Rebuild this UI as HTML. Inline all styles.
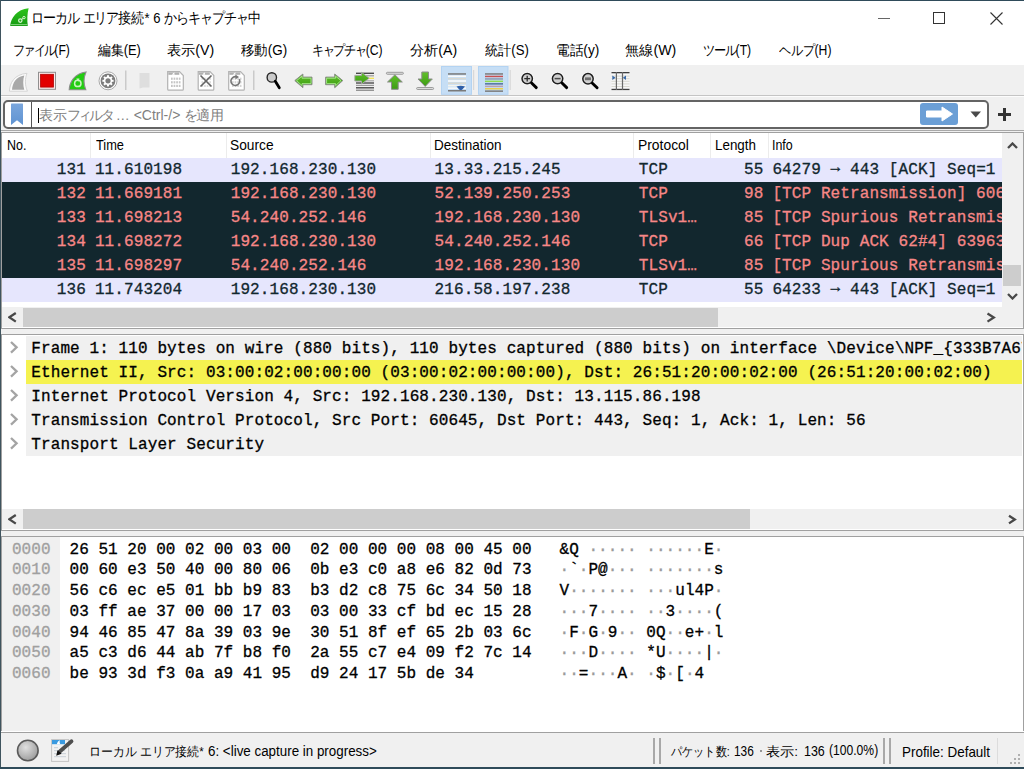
<!DOCTYPE html>
<html lang="ja">
<head>
<meta charset="utf-8">
<style>
*{margin:0;padding:0;box-sizing:border-box;}
html,body{width:1024px;height:769px;overflow:hidden;background:#fff;}
body{position:relative;font-family:"Liberation Sans",sans-serif;}
.a{position:absolute;}
.t{font-family:"Liberation Sans",sans-serif;white-space:pre;line-height:1;transform-origin:0 0;}
.m{font-family:"Liberation Mono",monospace;font-size:16px;white-space:pre;line-height:1;letter-spacing:0.1px;-webkit-text-stroke:0.3px currentColor;}
.d{color:#9a9a9a;}
</style>
</head>
<body>
<div class="a" style="left:0px;top:0px;width:1024px;height:769px;background:#fff;"></div>
<div class="a" style="left:1px;top:65px;width:1023px;height:30px;background:#f0f0f0;"></div>
<div class="a" style="left:1px;top:95px;width:1023px;height:1px;background:#c4c4c4;"></div>
<div class="a" style="left:1px;top:96px;width:1023px;height:1px;background:#fcfcfc;"></div>
<div class="a" style="left:1px;top:97px;width:1023px;height:33px;background:#f0f0f0;"></div>
<div class="a" style="left:1px;top:130px;width:1023px;height:1px;background:#a8a8a8;"></div>
<div class="a" style="left:1px;top:131px;width:1023px;height:1px;background:#f0f0f0;"></div>
<div class="a" style="left:1px;top:132px;width:1023px;height:1px;background:#a0a0a0;"></div>
<svg class="a" style="left:10px;top:8px" width="20" height="20" viewBox="0 0 20 20">
<defs><linearGradient id="gf" x1="0" y1="0" x2="0" y2="1"><stop offset="0" stop-color="#2ec41c"/><stop offset="1" stop-color="#159a12"/></linearGradient></defs>
<path d="M0.2 18 C0.6 10 7 1.2 18.6 0.2 C17.2 5.5 17 12 17.8 18 Z" fill="url(#gf)"/>
<path d="M1 16.6 H17.3" stroke="#8ed98a" stroke-width="0.9"/>
<circle cx="10.3" cy="12.6" r="1.7" fill="none" stroke="#d8f3d0" stroke-width="1.2"/>
<circle cx="14" cy="9.6" r="1.2" fill="none" stroke="#d8f3d0" stroke-width="1"/>
<path d="M11.6 11.4 L13 10.4" stroke="#d8f3d0" stroke-width="1"/>
</svg>
<div class="a t" style="left:30.79px;top:10.0px;font-size:15px;transform:scaleX(0.87);letter-spacing:0px;color:#000;"><span style="letter-spacing:-1.241px">ローカル</span> <span style="letter-spacing:-1.241px">エリア</span>接続* 6 <span style="letter-spacing:-1.241px">からキャプチャ</span>中</div>
<div class="a" style="left:878px;top:17.5px;width:12px;height:1.4px;background:#666;"></div>
<div class="a" style="left:933px;top:12px;width:12px;height:12px;border:1px solid #333"></div>
<svg class="a" style="left:990px;top:12px" width="13" height="13" viewBox="0 0 13 13"><path d="M0.5 0.5L12.5 12.5M12.5 0.5L0.5 12.5" stroke="#333" stroke-width="1.1"/></svg>
<div class="a t" style="left:13.46px;top:43.099999999999994px;font-size:14px;transform:scaleX(0.87);letter-spacing:0px;color:#000;"><span style="letter-spacing:-2.121px">ファイル</span>(F)</div>
<div class="a t" style="left:97.9px;top:42.699999999999996px;font-size:14px;transform:scaleX(0.9196);letter-spacing:0px;color:#000;">編集(E)</div>
<div class="a t" style="left:166.99px;top:42.699999999999996px;font-size:14px;transform:scaleX(1.0133);letter-spacing:0px;color:#000;">表示(V)</div>
<div class="a t" style="left:240.7px;top:42.699999999999996px;font-size:14px;transform:scaleX(0.9596);letter-spacing:0px;color:#000;">移動(G)</div>
<div class="a t" style="left:311.66px;top:43.199999999999996px;font-size:14px;transform:scaleX(0.87);letter-spacing:0px;color:#000;"><span style="letter-spacing:-1.660px">キャプチャ</span>(C)</div>
<div class="a t" style="left:409.69px;top:42.699999999999996px;font-size:14px;transform:scaleX(1.0111);letter-spacing:0px;color:#000;">分析(A)</div>
<div class="a t" style="left:484.6px;top:43.199999999999996px;font-size:14px;transform:scaleX(0.9391);letter-spacing:0px;color:#000;">統計(S)</div>
<div class="a t" style="left:555.62px;top:42.699999999999996px;font-size:14px;transform:scaleX(0.9767);letter-spacing:0px;color:#000;">電話(y)</div>
<div class="a t" style="left:625.29px;top:42.699999999999996px;font-size:14px;transform:scaleX(1.0143);letter-spacing:0px;color:#000;">無線(W)</div>
<div class="a t" style="left:702.83px;top:42.699999999999996px;font-size:14px;transform:scaleX(0.87);letter-spacing:0px;color:#000;"><span style="letter-spacing:-1.521px">ツール</span>(T)</div>
<div class="a t" style="left:778.9px;top:43.199999999999996px;font-size:14px;transform:scaleX(0.87);letter-spacing:0px;color:#000;"><span style="letter-spacing:-0.383px">ヘルプ</span>(H)</div>
<div class="a" style="left:3px;top:100px;width:986px;height:29px;border:2px solid #646464;border-radius:5px;background:#fff"></div>
<svg class="a" style="left:10px;top:103px" width="14" height="23" viewBox="0 0 14 23">
<defs><linearGradient id="bk" x1="0" y1="0" x2="0" y2="1"><stop offset="0" stop-color="#7aa6dc"/><stop offset="1" stop-color="#5f93d2"/></linearGradient></defs>
<path d="M1.5 0.5 H12.5 Q13 0.5 13 1.5 V22 L7 17.2 L1 22 V1.5 Q1 0.5 1.5 0.5Z" fill="url(#bk)"/></svg>
<div class="a" style="left:31px;top:102px;width:1px;height:26px;background:#555;"></div>
<div class="a" style="left:37.8px;top:108px;width:1.6px;height:15px;background:#000;"></div>
<div class="a t" style="left:38.6px;top:108.35px;font-size:14px;transform:scaleX(1.0);letter-spacing:0px;color:#808080;">表示<span style="letter-spacing:-2.680px">フィルタ</span> … &lt;Ctrl-/&gt; <span style="letter-spacing:-2.680px">を</span>適用</div>
<div class="a" style="left:920px;top:103px;width:38px;height:22px;border-radius:3px;background:#6b9fd6"></div>
<svg class="a" style="left:925px;top:106px" width="29" height="16" viewBox="0 0 29 16"><path d="M1.5 5 H17 V1 L27.5 8 L17 15 V11 H1.5 Z" fill="#fff" stroke="#fff" stroke-width="1" stroke-linejoin="round"/></svg>
<svg class="a" style="left:970px;top:111px" width="12" height="7" viewBox="0 0 12 7"><path d="M0.5 0.5 H11 L5.75 6.5Z" fill="#4a4a4a"/></svg>
<div class="a" style="left:998px;top:113px;width:13px;height:3px;background:#333;"></div>
<div class="a" style="left:1003px;top:108px;width:3px;height:13px;background:#333;"></div>
<div class="a" style="left:1px;top:133px;width:1px;height:195px;background:#a0a0a0;"></div>
<div class="a" style="left:1023px;top:133px;width:1px;height:195px;background:#a0a0a0;"></div>
<div class="a" style="left:2px;top:133px;width:1000px;height:174px;background:#fff;"></div>
<div class="a" style="left:90px;top:133px;width:1px;height:25px;background:#ececec;"></div>
<div class="a" style="left:226px;top:133px;width:1px;height:25px;background:#ececec;"></div>
<div class="a" style="left:430px;top:133px;width:1px;height:25px;background:#ececec;"></div>
<div class="a" style="left:633px;top:133px;width:1px;height:25px;background:#ececec;"></div>
<div class="a" style="left:710px;top:133px;width:1px;height:25px;background:#ececec;"></div>
<div class="a" style="left:768px;top:133px;width:1px;height:25px;background:#ececec;"></div>
<div class="a t" style="left:6.87px;top:137.2px;font-size:15px;transform:scaleX(0.8333);letter-spacing:0px;color:#000;">No.</div>
<div class="a t" style="left:95.6px;top:137.2px;font-size:15px;transform:scaleX(0.8531);letter-spacing:0px;color:#000;">Time</div>
<div class="a t" style="left:229.78px;top:137.2px;font-size:15px;transform:scaleX(0.9174);letter-spacing:0px;color:#000;">Source</div>
<div class="a t" style="left:434.3px;top:137.2px;font-size:15px;transform:scaleX(0.9);letter-spacing:0px;color:#000;">Destination</div>
<div class="a t" style="left:638.08px;top:137.2px;font-size:15px;transform:scaleX(0.9245);letter-spacing:0px;color:#000;">Protocol</div>
<div class="a t" style="left:714.61px;top:137.2px;font-size:15px;transform:scaleX(0.8932);letter-spacing:0px;color:#000;">Length</div>
<div class="a t" style="left:772.27px;top:137.2px;font-size:15px;transform:scaleX(0.8292);letter-spacing:0px;color:#000;">Info</div>
<div class="a" style="left:2px;top:158px;width:1000px;height:24px;background:#e6e6fd;"></div>
<div class="a m" style="left:56.8px;top:162.1px;color:#12272e;">131</div>
<div class="a m" style="left:94.9px;top:162.1px;color:#12272e;">11.610198</div>
<div class="a m" style="left:230.7px;top:162.1px;color:#12272e;">192.168.230.130</div>
<div class="a m" style="left:434.6px;top:162.1px;color:#12272e;">13.33.215.245</div>
<div class="a m" style="left:638.8px;top:162.1px;color:#12272e;">TCP</div>
<div class="a m" style="left:744.0px;top:162.1px;color:#12272e;">55</div>
<div class="a m" style="left:772.4px;top:162.1px;color:#12272e;width:229.60000000000002px;overflow:hidden">64279 <span style="position:relative;top:-2.5px">→</span> 443 [ACK] Seq=1 Ack=1 Win=1025 Len=0</div>
<div class="a" style="left:2px;top:182px;width:1000px;height:24px;background:#12272e;"></div>
<div class="a m" style="left:56.8px;top:186.1px;color:#f78787;">132</div>
<div class="a m" style="left:94.9px;top:186.1px;color:#f78787;">11.669181</div>
<div class="a m" style="left:230.7px;top:186.1px;color:#f78787;">192.168.230.130</div>
<div class="a m" style="left:434.6px;top:186.1px;color:#f78787;">52.139.250.253</div>
<div class="a m" style="left:638.8px;top:186.1px;color:#f78787;">TCP</div>
<div class="a m" style="left:744.0px;top:186.1px;color:#f78787;">98</div>
<div class="a m" style="left:772.4px;top:186.1px;color:#f78787;width:229.60000000000002px;overflow:hidden">[TCP Retransmission] 60645 <span style="position:relative;top:-2.5px">→</span> 443 [PSH, ACK]</div>
<div class="a" style="left:2px;top:206px;width:1000px;height:24px;background:#12272e;"></div>
<div class="a m" style="left:56.8px;top:210.1px;color:#f78787;">133</div>
<div class="a m" style="left:94.9px;top:210.1px;color:#f78787;">11.698213</div>
<div class="a m" style="left:230.7px;top:210.1px;color:#f78787;">54.240.252.146</div>
<div class="a m" style="left:434.6px;top:210.1px;color:#f78787;">192.168.230.130</div>
<div class="a m" style="left:638.8px;top:210.1px;color:#f78787;">TLSv1…</div>
<div class="a m" style="left:744.0px;top:210.1px;color:#f78787;">85</div>
<div class="a m" style="left:772.4px;top:210.1px;color:#f78787;width:229.60000000000002px;overflow:hidden">[TCP Spurious Retransmission] , Application Data</div>
<div class="a" style="left:2px;top:230px;width:1000px;height:24px;background:#12272e;"></div>
<div class="a m" style="left:56.8px;top:234.1px;color:#f78787;">134</div>
<div class="a m" style="left:94.9px;top:234.1px;color:#f78787;">11.698272</div>
<div class="a m" style="left:230.7px;top:234.1px;color:#f78787;">192.168.230.130</div>
<div class="a m" style="left:434.6px;top:234.1px;color:#f78787;">54.240.252.146</div>
<div class="a m" style="left:638.8px;top:234.1px;color:#f78787;">TCP</div>
<div class="a m" style="left:744.0px;top:234.1px;color:#f78787;">66</div>
<div class="a m" style="left:772.4px;top:234.1px;color:#f78787;width:229.60000000000002px;overflow:hidden">[TCP Dup ACK 62#4] 63963 <span style="position:relative;top:-2.5px">→</span> 443 [ACK] Seq=1</div>
<div class="a" style="left:2px;top:254px;width:1000px;height:24px;background:#12272e;"></div>
<div class="a m" style="left:56.8px;top:258.1px;color:#f78787;">135</div>
<div class="a m" style="left:94.9px;top:258.1px;color:#f78787;">11.698297</div>
<div class="a m" style="left:230.7px;top:258.1px;color:#f78787;">54.240.252.146</div>
<div class="a m" style="left:434.6px;top:258.1px;color:#f78787;">192.168.230.130</div>
<div class="a m" style="left:638.8px;top:258.1px;color:#f78787;">TLSv1…</div>
<div class="a m" style="left:744.0px;top:258.1px;color:#f78787;">85</div>
<div class="a m" style="left:772.4px;top:258.1px;color:#f78787;width:229.60000000000002px;overflow:hidden">[TCP Spurious Retransmission] , Application Data</div>
<div class="a" style="left:2px;top:278px;width:1000px;height:24px;background:#e6e6fd;"></div>
<div class="a m" style="left:56.8px;top:282.1px;color:#12272e;">136</div>
<div class="a m" style="left:94.9px;top:282.1px;color:#12272e;">11.743204</div>
<div class="a m" style="left:230.7px;top:282.1px;color:#12272e;">192.168.230.130</div>
<div class="a m" style="left:434.6px;top:282.1px;color:#12272e;">216.58.197.238</div>
<div class="a m" style="left:638.8px;top:282.1px;color:#12272e;">TCP</div>
<div class="a m" style="left:744.0px;top:282.1px;color:#12272e;">55</div>
<div class="a m" style="left:772.4px;top:282.1px;color:#12272e;width:229.60000000000002px;overflow:hidden">64233 <span style="position:relative;top:-2.5px">→</span> 443 [ACK] Seq=1 Ack=1 Win=1025 Len=0</div>
<div class="a" style="left:1002px;top:133px;width:21px;height:194px;background:#f0f0f0;"></div>
<div class="a" style="left:1003px;top:265px;width:18px;height:21px;background:#cdcdcd;"></div>
<svg class="a" style="left:1007px;top:142px" width="11" height="7" viewBox="0 0 11 7"><path d="M1 6 L5.5 1.5 L10 6" fill="none" stroke="#484848" stroke-width="2.3"/></svg>
<svg class="a" style="left:1007px;top:293px" width="11" height="7" viewBox="0 0 11 7"><path d="M1 1 L5.5 5.5 L10 1" fill="none" stroke="#484848" stroke-width="2.3"/></svg>
<div class="a" style="left:2px;top:307px;width:1000px;height:20px;background:#f0f0f0;"></div>
<div class="a" style="left:23px;top:308px;width:695px;height:19px;background:#cdcdcd;"></div>
<svg class="a" style="left:8px;top:312px" width="9" height="11" viewBox="0 0 9 11"><path d="M7.8 1 L1.3 5.3 L7.8 9.6" fill="none" stroke="#484848" stroke-width="2.3"/></svg>
<svg class="a" style="left:985px;top:312px" width="11" height="11" viewBox="0 0 11 11"><path d="M2.5 1.5 L8.8 5.5 L2.5 9.6" fill="none" stroke="#484848" stroke-width="2.3"/></svg>
<div class="a" style="left:1px;top:328px;width:1023px;height:1px;background:#a0a0a0;"></div>
<div class="a" style="left:1px;top:329px;width:1023px;height:5px;background:#f0f0f0;"></div>
<div class="a" style="left:1px;top:334px;width:1023px;height:1px;background:#a0a0a0;"></div>
<div class="a" style="left:1px;top:335px;width:1px;height:195px;background:#a0a0a0;"></div>
<div class="a" style="left:1023px;top:335px;width:1px;height:195px;background:#a0a0a0;"></div>
<div class="a" style="left:26px;top:335.5px;width:996px;height:24px;background:#f0f0f0;"></div>
<svg class="a" style="left:9px;top:341px" width="10" height="13" viewBox="0 0 10 13"><path d="M2 1 L7.6 6.3 L2 11.6" fill="none" stroke="#a4a4a4" stroke-width="2.3"/></svg>
<div class="a m" style="left:31.3px;top:341.4px;color:#000;width:990.7px;overflow:hidden">Frame 1: 110 bytes on wire (880 bits), 110 bytes captured (880 bits) on interface \Device\NPF_{333B7A67-1234}</div>
<div class="a" style="left:26px;top:359.5px;width:996px;height:24px;background:#f5f250;"></div>
<svg class="a" style="left:9px;top:365px" width="10" height="13" viewBox="0 0 10 13"><path d="M2 1 L7.6 6.3 L2 11.6" fill="none" stroke="#a4a4a4" stroke-width="2.3"/></svg>
<div class="a m" style="left:31.3px;top:365.4px;color:#000;width:990.7px;overflow:hidden">Ethernet II, Src: 03:00:02:00:00:00 (03:00:02:00:00:00), Dst: 26:51:20:00:02:00 (26:51:20:00:02:00)</div>
<div class="a" style="left:26px;top:383.5px;width:996px;height:24px;background:#f0f0f0;"></div>
<svg class="a" style="left:9px;top:389px" width="10" height="13" viewBox="0 0 10 13"><path d="M2 1 L7.6 6.3 L2 11.6" fill="none" stroke="#a4a4a4" stroke-width="2.3"/></svg>
<div class="a m" style="left:31.3px;top:389.4px;color:#000;width:990.7px;overflow:hidden">Internet Protocol Version 4, Src: 192.168.230.130, Dst: 13.115.86.198</div>
<div class="a" style="left:26px;top:407.5px;width:996px;height:24px;background:#f0f0f0;"></div>
<svg class="a" style="left:9px;top:413px" width="10" height="13" viewBox="0 0 10 13"><path d="M2 1 L7.6 6.3 L2 11.6" fill="none" stroke="#a4a4a4" stroke-width="2.3"/></svg>
<div class="a m" style="left:31.3px;top:413.4px;color:#000;width:990.7px;overflow:hidden">Transmission Control Protocol, Src Port: 60645, Dst Port: 443, Seq: 1, Ack: 1, Len: 56</div>
<div class="a" style="left:26px;top:431.5px;width:996px;height:24px;background:#f0f0f0;"></div>
<svg class="a" style="left:9px;top:437px" width="10" height="13" viewBox="0 0 10 13"><path d="M2 1 L7.6 6.3 L2 11.6" fill="none" stroke="#a4a4a4" stroke-width="2.3"/></svg>
<div class="a m" style="left:31.3px;top:437.4px;color:#000;width:990.7px;overflow:hidden">Transport Layer Security</div>
<div class="a" style="left:2px;top:509px;width:1021px;height:20px;background:#f0f0f0;"></div>
<div class="a" style="left:23px;top:509px;width:727px;height:20px;background:#cdcdcd;"></div>
<svg class="a" style="left:8px;top:514px" width="9" height="11" viewBox="0 0 9 11"><path d="M7.8 1 L1.3 5.3 L7.8 9.6" fill="none" stroke="#484848" stroke-width="2.3"/></svg>
<svg class="a" style="left:1006px;top:514px" width="11" height="11" viewBox="0 0 11 11"><path d="M3 1.8 L8.8 5.5 L3 9.4" fill="none" stroke="#484848" stroke-width="2.3"/></svg>
<div class="a" style="left:1px;top:530px;width:1023px;height:1px;background:#a0a0a0;"></div>
<div class="a" style="left:1px;top:531px;width:1023px;height:5px;background:#f0f0f0;"></div>
<div class="a" style="left:1px;top:536px;width:1023px;height:1px;background:#a0a0a0;"></div>
<div class="a" style="left:1px;top:537px;width:1px;height:195px;background:#a0a0a0;"></div>
<div class="a" style="left:1023px;top:537px;width:1px;height:195px;background:#a0a0a0;"></div>
<div class="a" style="left:2px;top:537px;width:58px;height:194px;background:#f0f0f0;"></div>
<div class="a m" style="left:11.9px;top:541.6px;color:#a0a0a0;">0000</div>
<div class="a m" style="left:69.5px;top:541.6px;color:#000;letter-spacing:0.025000000000000355px">26 51 20 00 02 00 03 00  02 00 00 00 08 00 45 00</div>
<div class="a m" style="left:559.575px;top:541.6px;color:#000;letter-spacing:0.025000000000000355px">&amp;Q <span class="d">·</span><span class="d">·</span><span class="d">·</span><span class="d">·</span><span class="d">·</span> <span class="d">·</span><span class="d">·</span><span class="d">·</span><span class="d">·</span><span class="d">·</span><span class="d">·</span>E<span class="d">·</span></div>
<div class="a m" style="left:11.9px;top:562.33px;color:#a0a0a0;">0010</div>
<div class="a m" style="left:69.5px;top:562.33px;color:#000;letter-spacing:0.025000000000000355px">00 60 e3 50 40 00 80 06  0b e3 c0 a8 e6 82 0d 73</div>
<div class="a m" style="left:559.575px;top:562.33px;color:#000;letter-spacing:0.025000000000000355px"><span class="d">·</span>`<span class="d">·</span>P@<span class="d">·</span><span class="d">·</span><span class="d">·</span> <span class="d">·</span><span class="d">·</span><span class="d">·</span><span class="d">·</span><span class="d">·</span><span class="d">·</span><span class="d">·</span>s</div>
<div class="a m" style="left:11.9px;top:583.0600000000001px;color:#a0a0a0;">0020</div>
<div class="a m" style="left:69.5px;top:583.0600000000001px;color:#000;letter-spacing:0.025000000000000355px">56 c6 ec e5 01 bb b9 83  b3 d2 c8 75 6c 34 50 18</div>
<div class="a m" style="left:559.575px;top:583.0600000000001px;color:#000;letter-spacing:0.025000000000000355px">V<span class="d">·</span><span class="d">·</span><span class="d">·</span><span class="d">·</span><span class="d">·</span><span class="d">·</span><span class="d">·</span> <span class="d">·</span><span class="d">·</span><span class="d">·</span>ul4P<span class="d">·</span></div>
<div class="a m" style="left:11.9px;top:603.79px;color:#a0a0a0;">0030</div>
<div class="a m" style="left:69.5px;top:603.79px;color:#000;letter-spacing:0.025000000000000355px">03 ff ae 37 00 00 17 03  03 00 33 cf bd ec 15 28</div>
<div class="a m" style="left:559.575px;top:603.79px;color:#000;letter-spacing:0.025000000000000355px"><span class="d">·</span><span class="d">·</span><span class="d">·</span>7<span class="d">·</span><span class="d">·</span><span class="d">·</span><span class="d">·</span> <span class="d">·</span><span class="d">·</span>3<span class="d">·</span><span class="d">·</span><span class="d">·</span><span class="d">·</span>(</div>
<div class="a m" style="left:11.9px;top:624.52px;color:#a0a0a0;">0040</div>
<div class="a m" style="left:69.5px;top:624.52px;color:#000;letter-spacing:0.025000000000000355px">94 46 85 47 8a 39 03 9e  30 51 8f ef 65 2b 03 6c</div>
<div class="a m" style="left:559.575px;top:624.52px;color:#000;letter-spacing:0.025000000000000355px"><span class="d">·</span>F<span class="d">·</span>G<span class="d">·</span>9<span class="d">·</span><span class="d">·</span> 0Q<span class="d">·</span><span class="d">·</span>e+<span class="d">·</span>l</div>
<div class="a m" style="left:11.9px;top:645.25px;color:#a0a0a0;">0050</div>
<div class="a m" style="left:69.5px;top:645.25px;color:#000;letter-spacing:0.025000000000000355px">a5 c3 d6 44 ab 7f b8 f0  2a 55 c7 e4 09 f2 7c 14</div>
<div class="a m" style="left:559.575px;top:645.25px;color:#000;letter-spacing:0.025000000000000355px"><span class="d">·</span><span class="d">·</span><span class="d">·</span>D<span class="d">·</span><span class="d">·</span><span class="d">·</span><span class="d">·</span> *U<span class="d">·</span><span class="d">·</span><span class="d">·</span><span class="d">·</span>|<span class="d">·</span></div>
<div class="a m" style="left:11.9px;top:665.98px;color:#a0a0a0;">0060</div>
<div class="a m" style="left:69.5px;top:665.98px;color:#000;letter-spacing:0.025000000000000355px">be 93 3d f3 0a a9 41 95  d9 24 17 5b de 34</div>
<div class="a m" style="left:559.575px;top:665.98px;color:#000;letter-spacing:0.025000000000000355px"><span class="d">·</span><span class="d">·</span>=<span class="d">·</span><span class="d">·</span><span class="d">·</span>A<span class="d">·</span> <span class="d">·</span>$<span class="d">·</span>[<span class="d">·</span>4</div>
<div class="a" style="left:1px;top:731px;width:1023px;height:1px;background:#fff;"></div>
<div class="a" style="left:1px;top:732px;width:1023px;height:1px;background:#a0a0a0;"></div>
<div class="a" style="left:1px;top:733px;width:1023px;height:34px;background:#f0f0f0;"></div>
<svg class="a" style="left:16px;top:738px" width="24" height="25" viewBox="0 0 24 25">
<defs><radialGradient id="cg" cx="0.4" cy="0.35" r="0.7"><stop offset="0" stop-color="#e0e0e0"/><stop offset="1" stop-color="#9a9a9a"/></radialGradient></defs>
<circle cx="11.8" cy="12.5" r="10.3" fill="url(#cg)" stroke="#5a5a5a" stroke-width="1.6"/></svg>
<svg class="a" style="left:50px;top:738px" width="25" height="25" viewBox="50 738 25 25">
<rect x="51.6" y="739.6" width="17" height="21.8" fill="#f2f2f2" stroke="#c4c4c4" stroke-width="1"/>
<rect x="52" y="740" width="13" height="4.2" fill="#3a9ae0"/>
<path d="M56.8 744.2 C57.3 741.8 58.6 740.6 60 740.2 C59.4 741.6 59.5 743 60.4 744.2 Z" fill="#fff"/>
<g fill="#d0d6dc"><rect x="54" y="747" width="4" height="1.2"/><rect x="54" y="750" width="11" height="1.2"/><rect x="54" y="753" width="12" height="1.2"/><rect x="54" y="756" width="12" height="1.2"/></g>
<path d="M59.2 752 L71.5 741.2" stroke="#4e4e4e" stroke-width="3.8" stroke-linecap="round"/>
<path d="M56.2 755.8 L57.6 750.3 L61.6 753.8 Z" fill="#111"/>
</svg>
<div class="a t" style="left:89.17px;top:746.15px;font-size:12.5px;transform:scaleX(0.9154);letter-spacing:0px;color:#000;">ローカル エリア接続*</div>
<div class="a t" style="left:208.14px;top:743.65px;font-size:14px;transform:scaleX(0.9554);letter-spacing:0px;color:#000;">6: &lt;live capture in progress&gt;</div>
<div class="a" style="left:653px;top:738px;width:2px;height:26px;background:#a8a8a8;"></div>
<div class="a" style="left:659px;top:738px;width:2px;height:26px;background:#a8a8a8;"></div>
<div class="a t" style="left:670.8px;top:745.5px;font-size:12.5px;transform:scaleX(0.8559);letter-spacing:0px;color:#000;">パケット数:</div>
<div class="a t" style="left:734.35px;top:743.65px;font-size:14px;transform:scaleX(0.8455);letter-spacing:0px;color:#000;">136</div>
<div class="a t" style="left:766.31px;top:746.0px;font-size:12.5px;transform:scaleX(1.0857);letter-spacing:0px;color:#000;">表示:</div>
<div class="a t" style="left:804.11px;top:743.65px;font-size:14px;transform:scaleX(0.8909);letter-spacing:0px;color:#000;">136</div>
<div class="a t" style="left:828.83px;top:743.25px;font-size:14px;transform:scaleX(0.8655);letter-spacing:0px;color:#000;">(100.0%)</div>
<div class="a" style="left:759.6px;top:750.2px;width:2.2px;height:2.2px;background:#777;border-radius:50%"></div>
<div class="a" style="left:883px;top:738px;width:2px;height:26px;background:#a8a8a8;"></div>
<div class="a" style="left:889px;top:738px;width:2px;height:26px;background:#a8a8a8;"></div>
<div class="a t" style="left:902.27px;top:744.5px;font-size:14.5px;transform:scaleX(0.9255);letter-spacing:0px;color:#000;">Profile: Default</div>
<div class="a" style="left:997px;top:738px;width:1px;height:26px;background:#dcdcdc;"></div>
<div class="a" style="left:1018px;top:754px;width:2px;height:2px;background:#b0b0b0;"></div>
<div class="a" style="left:1014px;top:758px;width:2px;height:2px;background:#b0b0b0;"></div>
<div class="a" style="left:1018px;top:758px;width:2px;height:2px;background:#b0b0b0;"></div>
<div class="a" style="left:1010px;top:762px;width:2px;height:2px;background:#b0b0b0;"></div>
<div class="a" style="left:1014px;top:762px;width:2px;height:2px;background:#b0b0b0;"></div>
<div class="a" style="left:1018px;top:762px;width:2px;height:2px;background:#b0b0b0;"></div>
<div class="a" style="left:0px;top:0px;width:1024px;height:1px;background:#2f4b5a;"></div>
<div class="a" style="left:0px;top:0px;width:1px;height:769px;background:#3f545e;"></div>
<div class="a" style="left:0px;top:767px;width:1024px;height:2px;background:#2f4b5a;"></div>
<svg class="a" style="left:0;top:62px" width="640" height="36" viewBox="0 62 640 36">
<defs>
<linearGradient id="ga" x1="0" y1="0" x2="0" y2="1"><stop offset="0" stop-color="#62c02c"/><stop offset="1" stop-color="#3c9c12"/></linearGradient>
</defs>
<!-- gray fin -->
<path d="M9.4 91.2 C9.8 83 14 74.5 27 73.3 C24.9 78.5 24.7 85 27.4 91.2 Z" fill="#fbfbfb" stroke="#d0d0d0" stroke-width="0.9"/>
<path d="M12 89.7 C12.5 83 16 76.5 24.3 75.4 C22.9 79.5 22.9 85 24.3 89.7 Z" fill="#a9a9a9"/>
<!-- stop -->
<rect x="38.5" y="72.3" width="17" height="17" fill="#fdeaea" stroke="#8f8f8f" stroke-width="1"/>
<rect x="40.6" y="74.3" width="12.8" height="12.8" fill="#e20000" stroke="#b00000" stroke-width="0.8"/>
<!-- green fin -->
<path d="M69.2 89.8 C69.6 82 74.5 73.5 86 72 C83.6 77.5 83.4 84 85.8 89.8 Z" fill="#22cc11" stroke="#8c8c8c" stroke-width="1.1"/>
<circle cx="77.8" cy="83.4" r="3.2" fill="none" stroke="#c9f3bf" stroke-width="1.5"/>
<path d="M76.3 78.5 L79.5 78.5 L78.2 81.8 Z" fill="#c9f3bf"/>
<!-- gear -->
<circle cx="108" cy="80.8" r="9" fill="#fdfdfd" stroke="#a0a0a0" stroke-width="0.9"/>
<circle cx="108" cy="80.8" r="7.4" fill="#7c7c7c"/>
<g fill="#fff">
<circle cx="108" cy="80.8" r="4.2"/>
<rect x="107" y="75.2" width="2" height="11.2"/>
<rect x="102.4" y="79.8" width="11.2" height="2"/>
<rect x="107" y="75.2" width="2" height="11.2" transform="rotate(45 108 80.8)"/>
<rect x="107" y="75.2" width="2" height="11.2" transform="rotate(-45 108 80.8)"/>
</g>
<circle cx="108" cy="80.8" r="2.6" fill="#7c7c7c"/>
<!-- sep -->
<rect x="125" y="70.5" width="1.5" height="19.5" fill="#cacaca"/>
<!-- faded icon -->
<path d="M139.5 73 L149.5 73 L149.5 87.5 L143 87.5 L139.5 88.5 Z" fill="#dedede"/>
<!-- doc -->
<g>
<path d="M167.7 71.7 H179.5 L183.3 75.5 V89.2 Q183.3 90.2 182.3 90.2 H168.7 Q167.7 90.2 167.7 89.2 Z" fill="#fff" stroke="#b2b2b2" stroke-width="1.2"/>
<path d="M168.3 72.3 H179.3 V74.8 H168.3 Z" fill="#b0b0b0"/>
<path d="M172 74.8 C172.5 73.6 173.5 72.8 174.6 72.5 C174.2 73.3 174.3 74 174.8 74.8 Z" fill="#fff"/>
<rect x="171.0" y="77.6" width="1.7" height="2.2" fill="#c4c4c4"/><rect x="173.6" y="77.6" width="1.7" height="2.2" fill="#c4c4c4"/><rect x="176.2" y="77.6" width="1.7" height="2.2" fill="#c4c4c4"/><rect x="178.8" y="77.6" width="1.7" height="2.2" fill="#c4c4c4"/><rect x="171.0" y="81.2" width="1.7" height="2.2" fill="#c4c4c4"/><rect x="173.6" y="81.2" width="1.7" height="2.2" fill="#c4c4c4"/><rect x="176.2" y="81.2" width="1.7" height="2.2" fill="#c4c4c4"/><rect x="178.8" y="81.2" width="1.7" height="2.2" fill="#c4c4c4"/><rect x="171.0" y="84.8" width="1.7" height="2.2" fill="#c4c4c4"/><rect x="173.6" y="84.8" width="1.7" height="2.2" fill="#c4c4c4"/><rect x="176.2" y="84.8" width="1.7" height="2.2" fill="#c4c4c4"/><rect x="178.8" y="84.8" width="1.7" height="2.2" fill="#c4c4c4"/>
</g>
<g>
<path d="M198.2 71.7 H210.0 L213.8 75.5 V89.2 Q213.8 90.2 212.8 90.2 H199.2 Q198.2 90.2 198.2 89.2 Z" fill="#fff" stroke="#b2b2b2" stroke-width="1.2"/>
<path d="M198.8 72.3 H209.8 V74.8 H198.8 Z" fill="#b0b0b0"/>
<path d="M202.5 74.8 C203.0 73.6 204.0 72.8 205.1 72.5 C204.7 73.3 204.8 74 205.3 74.8 Z" fill="#fff"/>
<rect x="201.5" y="77.6" width="1.7" height="2.2" fill="#dadada"/><rect x="204.1" y="77.6" width="1.7" height="2.2" fill="#dadada"/><rect x="206.7" y="77.6" width="1.7" height="2.2" fill="#dadada"/><rect x="209.3" y="77.6" width="1.7" height="2.2" fill="#dadada"/><rect x="201.5" y="81.2" width="1.7" height="2.2" fill="#dadada"/><rect x="204.1" y="81.2" width="1.7" height="2.2" fill="#dadada"/><rect x="206.7" y="81.2" width="1.7" height="2.2" fill="#dadada"/><rect x="209.3" y="81.2" width="1.7" height="2.2" fill="#dadada"/><rect x="201.5" y="84.8" width="1.7" height="2.2" fill="#dadada"/><rect x="204.1" y="84.8" width="1.7" height="2.2" fill="#dadada"/><rect x="206.7" y="84.8" width="1.7" height="2.2" fill="#dadada"/><rect x="209.3" y="84.8" width="1.7" height="2.2" fill="#dadada"/><path d="M200.5 75.5 L211.5 86.5 M211.5 75.5 L200.5 86.5" stroke="#636363" stroke-width="1.6"/>
</g>
<g>
<path d="M228.7 71.7 H240.5 L244.3 75.5 V89.2 Q244.3 90.2 243.3 90.2 H229.7 Q228.7 90.2 228.7 89.2 Z" fill="#fff" stroke="#b2b2b2" stroke-width="1.2"/>
<path d="M229.3 72.3 H240.3 V74.8 H229.3 Z" fill="#b0b0b0"/>
<path d="M233 74.8 C233.5 73.6 234.5 72.8 235.6 72.5 C235.2 73.3 235.3 74 235.8 74.8 Z" fill="#fff"/>
<rect x="232.0" y="77.6" width="1.7" height="2.2" fill="#d4d4d4"/><rect x="234.6" y="77.6" width="1.7" height="2.2" fill="#d4d4d4"/><rect x="237.2" y="77.6" width="1.7" height="2.2" fill="#d4d4d4"/><rect x="239.8" y="77.6" width="1.7" height="2.2" fill="#d4d4d4"/><rect x="232.0" y="81.2" width="1.7" height="2.2" fill="#d4d4d4"/><rect x="234.6" y="81.2" width="1.7" height="2.2" fill="#d4d4d4"/><rect x="237.2" y="81.2" width="1.7" height="2.2" fill="#d4d4d4"/><rect x="239.8" y="81.2" width="1.7" height="2.2" fill="#d4d4d4"/><rect x="232.0" y="84.8" width="1.7" height="2.2" fill="#d4d4d4"/><rect x="234.6" y="84.8" width="1.7" height="2.2" fill="#d4d4d4"/><rect x="237.2" y="84.8" width="1.7" height="2.2" fill="#d4d4d4"/><rect x="239.8" y="84.8" width="1.7" height="2.2" fill="#d4d4d4"/><path d="M239.3 79.2 A4.4 4.4 0 1 1 236.8 76.9" fill="none" stroke="#767676" stroke-width="1.6"/><path d="M235.3 74.6 L239 76.9 L235.6 79.2 Z" fill="#767676"/>
</g>
<!-- sep -->
<rect x="253" y="70.5" width="1.5" height="19.5" fill="#cacaca"/>
<!-- find -->
<circle cx="271.8" cy="77.4" r="5.6" fill="#fff" opacity="0.8"/>
<circle cx="271.8" cy="77.4" r="4.7" fill="#cbcbcb" stroke="#262626" stroke-width="1.4"/>
<path d="M275.3 81.3 L279.3 87.8" stroke="#000" stroke-width="2.8" stroke-linecap="round"/>
<!-- back -->
<path d="M294.8 80.6 L302.9 74 V77.1 H312 V84.7 H302.9 V87.7 Z" fill="url(#ga)" stroke="#8d8d8d" stroke-width="1" stroke-linejoin="round"/>
<path d="M296.6 80.6 L302 76.2 V78.2 H311 V83.6 H302 V85.6 Z" fill="none" stroke="#b8f0a0" stroke-width="0.8" stroke-linejoin="round"/>
<!-- forward -->
<path d="M342.8 80.6 L334.7 74 V77.1 H325.6 V84.7 H334.7 V87.7 Z" fill="url(#ga)" stroke="#8d8d8d" stroke-width="1" stroke-linejoin="round"/>
<path d="M341 80.6 L335.6 76.2 V78.2 H326.6 V83.6 H335.6 V85.6 Z" fill="none" stroke="#b8f0a0" stroke-width="0.8" stroke-linejoin="round"/>
<!-- go to packet -->
<g>
<rect x="356" y="72.6" width="18" height="1.4" fill="#4a4a4a"/>
<rect x="356" y="75.2" width="18" height="1.2" fill="#9a9a9a"/>
<rect x="366" y="77.6" width="8" height="1.4" fill="#f3e45a"/>
<rect x="356" y="80.2" width="18" height="1.2" fill="#aaaaaa"/>
<rect x="356" y="82.3" width="18" height="1.4" fill="#4a4a4a"/>
<rect x="356" y="84.8" width="18" height="1.2" fill="#9a9a9a"/>
<rect x="356" y="87.1" width="18" height="1.4" fill="#4a4a4a"/>
<rect x="356" y="89.6" width="18" height="1.3" fill="#8a8a8a"/>
<path d="M354.8 75.4 H361.5 V72.3 L369.2 78.2 L361.5 84.1 V81 H354.8 Z" fill="url(#ga)" stroke="#a8a8a8" stroke-width="0.9" stroke-linejoin="round"/>
</g>
<!-- first packet -->
<rect x="386.4" y="72.3" width="17" height="2" rx="1" fill="#dcdcdc" stroke="#8a8a8a" stroke-width="0.8"/>
<path d="M394.9 74.8 L402.3 82 H398.2 V89.3 H391.5 V82 H387.5 Z" fill="url(#ga)" stroke="#8d8d8d" stroke-width="1" stroke-linejoin="round"/>
<!-- last packet -->
<path d="M425.2 86.4 L432.3 79 H428.5 V72 H421.8 V79 H418 Z" fill="url(#ga)" stroke="#8d8d8d" stroke-width="1" stroke-linejoin="round"/>
<rect x="416.6" y="87.5" width="17" height="2" rx="1" fill="#dcdcdc" stroke="#8a8a8a" stroke-width="0.8"/>
<!-- autoscroll button -->
<rect x="441.5" y="66.5" width="30" height="27.8" fill="#c6def5" stroke="#b3d3f2" stroke-width="1"/>
<rect x="448" y="73.2" width="18" height="1.5" fill="#7a7a7a"/>
<rect x="448" y="75.5" width="18" height="1.6" fill="#fafafa"/>
<rect x="448" y="77.9" width="18" height="1.5" fill="#d8d8d0"/>
<rect x="448" y="80.2" width="18" height="1.6" fill="#fafafa"/>
<rect x="448" y="82.5" width="18" height="1.5" fill="#d8d8d0"/>
<rect x="448" y="84.8" width="18" height="1.6" fill="#f4f4ee"/>
<rect x="448" y="87.4" width="18" height="1.5" fill="#fafafa"/>
<rect x="448" y="90" width="18" height="1.5" fill="#7a7a7a"/>
<path d="M456.5 86.5 Q460.7 85 465 86.5 L462.5 89.2 Q460.7 91 459 89.2 Z" fill="#2f5fa8"/>
<rect x="473" y="70" width="1.2" height="20" fill="#d8d8d8"/>
<!-- colorize button -->
<rect x="478.5" y="66.5" width="29.5" height="27.8" fill="#c6def5" stroke="#b3d3f2" stroke-width="1"/>
<rect x="485" y="73.2" width="18" height="1.5" fill="#7c7c7c"/>
<rect x="485" y="75.7" width="18" height="1.5" fill="#c85050"/>
<rect x="485" y="78.2" width="18" height="1.5" fill="#8a9ab0"/>
<rect x="485" y="80.6" width="18" height="1.5" fill="#90dc50"/>
<rect x="485" y="83.1" width="18" height="1.5" fill="#5070a0"/>
<rect x="485" y="85.6" width="18" height="1.5" fill="#b8a0b0"/>
<rect x="485" y="88" width="18" height="1.5" fill="#e8d050"/>
<rect x="485" y="90.4" width="18" height="1.5" fill="#7c7c7c"/>
<rect x="509.6" y="70" width="1.2" height="20" fill="#d8d8d8"/>
<!-- zoom in -->
<circle cx="527.2" cy="78.6" r="6.6" fill="#fff" opacity="0.85"/>
<circle cx="527.2" cy="78.6" r="5.2" fill="#cfcfcf" stroke="#1e1e1e" stroke-width="1.5"/>
<path d="M524.3 78.6 H530.1 M527.2 75.7 V81.5" stroke="#2a2a2a" stroke-width="1.3"/>
<path d="M531.6 83 L536.3 87.6" stroke="#000" stroke-width="2.9" stroke-linecap="round"/>
<!-- zoom out -->
<circle cx="557.6" cy="78.6" r="6.6" fill="#fff" opacity="0.85"/>
<circle cx="557.6" cy="78.6" r="5.2" fill="#cfcfcf" stroke="#1e1e1e" stroke-width="1.5"/>
<path d="M554.6 78.6 H560.6" stroke="#4a4a4a" stroke-width="1.5"/>
<path d="M562 83 L566.7 87.6" stroke="#000" stroke-width="2.9" stroke-linecap="round"/>
<!-- zoom 100 -->
<circle cx="588" cy="78.8" r="6.6" fill="#fff" opacity="0.85"/>
<circle cx="588" cy="78.8" r="5.2" fill="#cfcfcf" stroke="#1e1e1e" stroke-width="1.5"/>
<rect x="585" y="77.4" width="6" height="2.8" fill="#6e6e6e"/>
<path d="M592.4 83.2 L597.1 87.8" stroke="#000" stroke-width="2.9" stroke-linecap="round"/>
<!-- resize columns -->
<rect x="611.5" y="72.8" width="18" height="16.8" fill="#f7f7f7"/>
<g fill="#d8d8d0"><rect x="611.5" y="75.6" width="18" height="1"/><rect x="611.5" y="78.2" width="18" height="1"/><rect x="611.5" y="80.8" width="18" height="1"/><rect x="611.5" y="83.4" width="18" height="1"/><rect x="611.5" y="86" width="18" height="1"/></g>
<rect x="611.5" y="72" width="18" height="1.3" fill="#3e3e3e"/>
<rect x="611.5" y="88.8" width="18" height="1.3" fill="#3e3e3e"/>
<rect x="615.8" y="72" width="1.2" height="18" fill="#6a6a6a"/>
<rect x="621.9" y="72" width="1.2" height="18" fill="#6a6a6a"/>
<path d="M612.3 75.6 L615.6 77.8 L612.3 80 Z" fill="#3a6aa8"/>
<path d="M626 75.6 L622.9 77.8 L626 80 Z" fill="#3a6aa8"/>
</svg>

</body>
</html>
